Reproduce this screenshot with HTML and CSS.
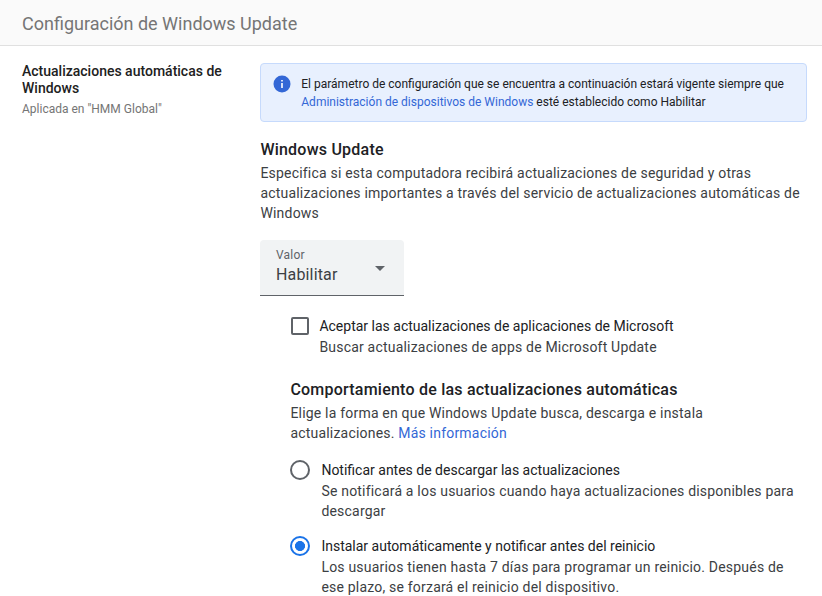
FILE: index.html
```html
<!DOCTYPE html>
<html lang="es">
<head>
<meta charset="utf-8">
<title>Configuración de Windows Update</title>
<link rel="stylesheet" href="styles.css">
</head>
<body>
<header class="header"><h1>Configuración de Windows Update</h1></header>
<div class="layout">
  <aside class="side">
    <h2>Actualizaciones automáticas de Windows</h2>
    <p>Aplicada en "HMM Global"</p>
  </aside>
  <main class="main">
    <div class="notice">
      <svg class="info" viewBox="0 0 18 18"><circle cx="9" cy="9" r="8.5" fill="#3367d6"/><path d="M8.2 8h1.6v5H8.2zM8.2 5h1.6v1.6H8.2z" fill="#fff"/></svg>
      <p>El parámetro de configuración que se encuentra a continuación estará vigente siempre que<br><a class="link">Administración de dispositivos de Windows</a> esté establecido como Habilitar</p>
    </div>
    <section class="update">
      <h3>Windows Update</h3>
      <p class="desc">Especifica si esta computadora recibirá actualizaciones de seguridad y otras<br>actualizaciones importantes a través del servicio de actualizaciones automáticas de<br>Windows</p>
    </section>
    <div class="select">
      <div><div class="select-label">Valor</div><div class="select-value">Habilitar</div></div>
      <svg class="arrow" viewBox="0 0 10 5"><path d="M0 0h10L5 5z" fill="#5f6368"/></svg>
    </div>
    <div class="nested">
      <div class="option check">
        <span class="box"></span>
        <div><div class="title">Aceptar las actualizaciones de aplicaciones de Microsoft</div><p class="desc">Buscar actualizaciones de apps de Microsoft Update</p></div>
      </div>
      <section class="behavior">
        <h3>Comportamiento de las actualizaciones automáticas</h3>
        <p class="desc">Elige la forma en que Windows Update busca, descarga e instala<br>actualizaciones. <a class="link">Más información</a></p>
      </section>
      <div class="option">
        <span class="radio"></span>
        <div><div class="title">Notificar antes de descargar las actualizaciones</div><p class="desc">Se notificará a los usuarios cuando haya actualizaciones disponibles para<br>descargar</p></div>
      </div>
      <div class="option">
        <span class="radio selected"></span>
        <div><div class="title">Instalar automáticamente y notificar antes del reinicio</div><p class="desc">Los usuarios tienen hasta 7 días para programar un reinicio. Después de<br>ese plazo, se forzará el reinicio del dispositivo.</p></div>
      </div>
    </div>
  </main>
</div>
</body>
</html>
```

FILE: styles.css
```css
* { box-sizing: border-box; }
body { margin: 0; height: 596px; overflow: hidden; background: #fff; color: #202124; font-family: Roboto, sans-serif; font-size: 14px; line-height: 20px; white-space: nowrap; }
h1, h2, h3, p { margin: 0; }
.header { height: 46px; padding: 12px 22px 0; background: #fafafa; border-bottom: 1px solid #e0e0e0; }
h1 { font-size: 18px; line-height: 24px; font-weight: 400; color: #757575; }
.layout { display: grid; grid-template-columns: 238px 547px; padding: 17px 0 0 22px; }
.side { padding-right: 20px; white-space: normal; }
h2 { font-size: 14px; line-height: 17px; font-weight: 500; color: #212121; }
.side p { margin-top: 4px; font-size: 12px; line-height: 16px; color: #757575; }
.notice { display: flex; gap: 10.7px; height: 59px; padding: 11px 11.6px; border: 1px solid #c6dafc; border-radius: 4px; background: #e8f0fe; font-size: 12px; line-height: 18px; }
.info { width: 18px; height: 18px; flex: none; }
.link { color: #3367d6; }
.update { margin-top: 16px; }
h3 { padding-bottom: 1px; font-size: 16px; line-height: 24px; font-weight: 500; letter-spacing: .22px; }
.desc { color: #3c4043; letter-spacing: .2px; }
.update h3, .update .desc, .behavior h3, .behavior .desc, .title, .title + .desc { padding-left: .4px; }
.select { display: flex; width: 144px; height: 56px; margin-top: 17px; padding: 7px 19px 0 16px; justify-content: space-between; background: #f1f3f4; border-bottom: 1px solid #5f6368; border-radius: 4px 4px 0 0; }
.select-label { font-size: 12px; line-height: 16px; color: #5f6368; letter-spacing: .2px; }
.select-value { font-size: 16px; line-height: 24px; color: #3c4043; letter-spacing: .15px; }
.arrow { width: 10px; height: 5px; margin-top: 19px; }
.nested { padding: 20px 0 0 30px; }
.option { display: flex; gap: 11px; margin-bottom: 15px; }
.title { line-height: 21px; }
.check { gap: 10px; margin-bottom: 21px; }
.box { width: 18px; height: 18px; margin: 1px 0 0 1px; border: 2px solid #5f6368; border-radius: 2px; flex: none; }
.behavior { margin-bottom: 17px; }
.radio { width: 20px; height: 20px; border: 2px solid #5f6368; border-radius: 50%; flex: none; }
.selected { border-color: #1a73e8; background: radial-gradient(circle, #1a73e8 0 4.7px, transparent 5.3px); }
```
